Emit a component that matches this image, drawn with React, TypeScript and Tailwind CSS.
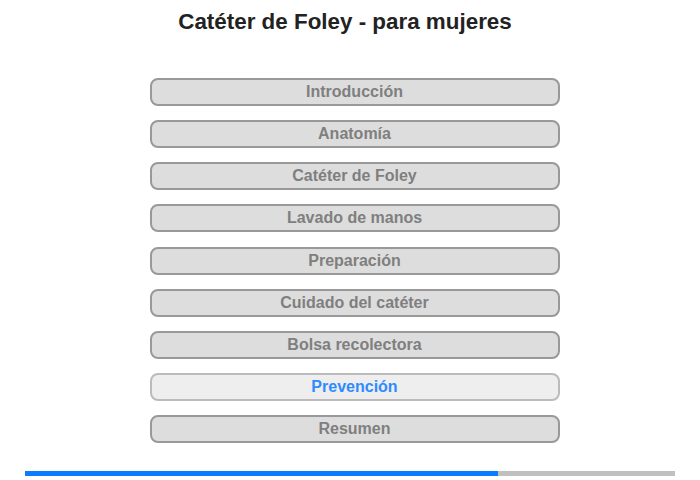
import React from "react";

// Menu items of the lesson, "Prevención" is the current one
const ITEMS = [
  "Introducción",
  "Anatomía",
  "Catéter de Foley",
  "Lavado de manos",
  "Preparación",
  "Cuidado del catéter",
  "Bolsa recolectora",
  "Prevención",
  "Resumen",
];

const CURRENT = "Prevención";
const PROGRESS = 72.8;

export default function App() {
  return (
    <div className="w-[700px] h-[480px] bg-white font-['Liberation_Sans',Arial,sans-serif] flex flex-col items-center">
      <h1 className="mt-[9px] mr-[10px] text-[22.4px] leading-[26px] font-bold text-[#222]">
        Catéter de Foley - para mujeres
      </h1>

      <div className="mt-[43px] ml-[9px] flex flex-col gap-[14.15px]">
        {ITEMS.map((item) => {
          const active = item === CURRENT;
          return (
            <button
              key={item}
              className={`w-[410px] h-[28px] rounded-[8px] border-2 text-[16px] leading-none font-bold ${
                active
                  ? "bg-[#eeeeee] border-[#bbbbbb] text-[#2e8bff]"
                  : "bg-[#dddddd] border-[#999999] text-[#7f7f7f]"
              }`}
            >
              {item}
            </button>
          );
        })}
      </div>

      <div className="mt-[28px] w-[650px] h-[5px] bg-[#c0c0c0]">
        <div className="h-full bg-[#0a7cff]" style={{ width: `${PROGRESS}%` }} />
      </div>
    </div>
  );
}
